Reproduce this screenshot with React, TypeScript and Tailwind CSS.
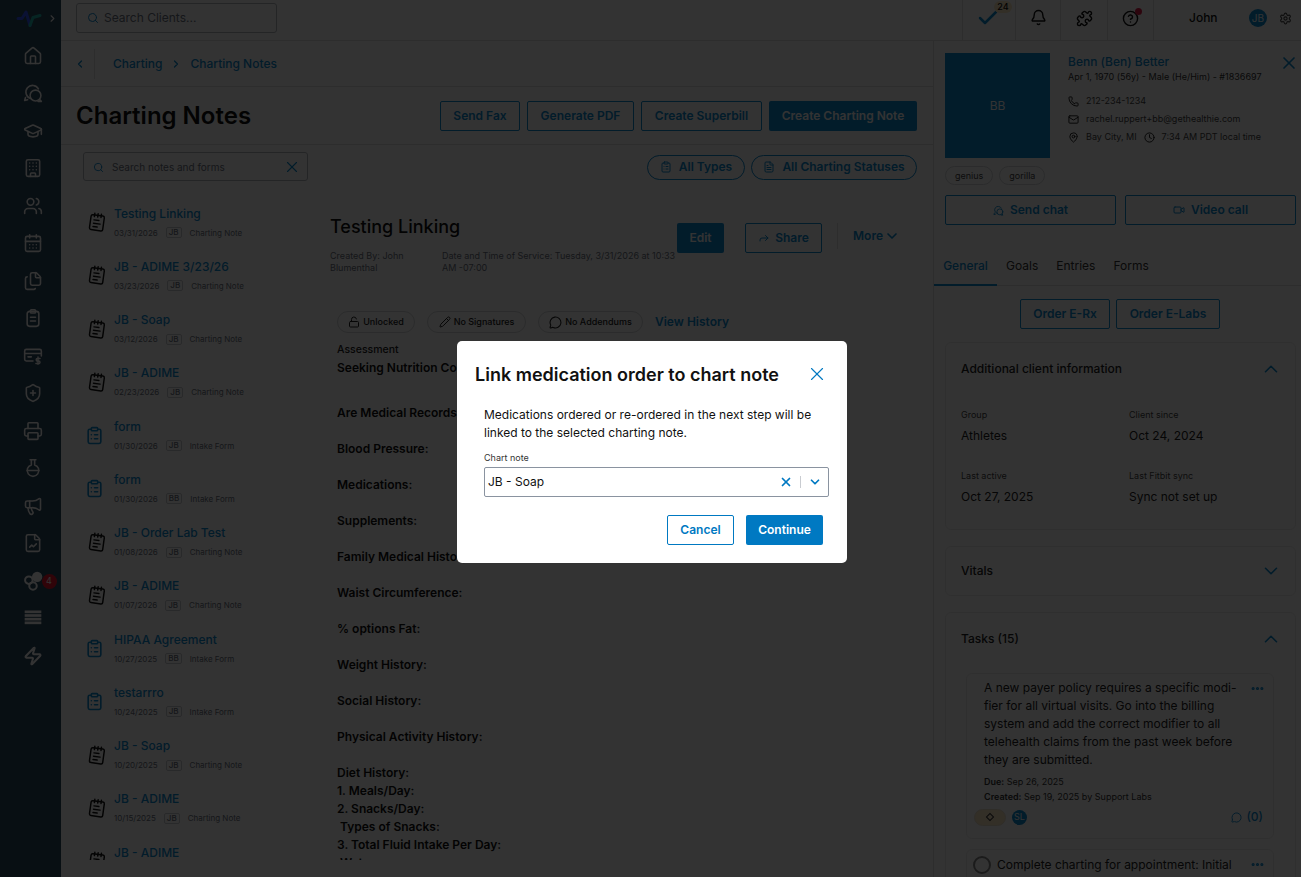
import { ReactNode } from 'react';
import {
  House, GraduationCap, Building, Users, CalendarDays, Files, ShieldPlus, Printer,
  FlaskRound, Megaphone, FileChartLine, Zap, Search, ChevronLeft, ChevronRight, ChevronDown, ChevronUp, X, Check,
  Bell, Puzzle, CircleHelp, Settings, Phone, Mail, MapPin, Clock, Video, MessageCircle, LockOpen, Pencil, Forward,
  ClipboardList, NotepadText, FileText, Ellipsis,
} from 'lucide-react';

const notes = [
  { title: 'Testing Linking', date: '03/31/2026', who: 'JB', type: 'Charting Note' },
  { title: 'JB - ADIME 3/23/26', date: '03/23/2026', who: 'JB', type: 'Charting Note' },
  { title: 'JB - Soap', date: '03/12/2026', who: 'JB', type: 'Charting Note' },
  { title: 'JB - ADIME', date: '02/23/2026', who: 'JB', type: 'Charting Note' },
  { title: 'form', date: '01/30/2026', who: 'JB', type: 'Intake Form' },
  { title: 'form', date: '01/30/2026', who: 'BB', type: 'Intake Form' },
  { title: 'JB - Order Lab Test', date: '01/08/2026', who: 'JB', type: 'Charting Note' },
  { title: 'JB - ADIME', date: '01/07/2026', who: 'JB', type: 'Charting Note' },
  { title: 'HIPAA Agreement', date: '10/27/2025', who: 'BB', type: 'Intake Form' },
  { title: 'testarrro', date: '10/24/2025', who: 'JB', type: 'Intake Form' },
  { title: 'JB - Soap', date: '10/20/2025', who: 'JB', type: 'Charting Note' },
  { title: 'JB - ADIME', date: '10/15/2025', who: 'JB', type: 'Charting Note' },
  { title: 'JB - ADIME', date: '10/02/2025', who: 'JB', type: 'Charting Note' },
];

// Question rows of the note body; null leaves a blank line
const noteLines: (string | null)[] = [
  'Are Medical Records Available?', null,
  'Blood Pressure:', null,
  'Medications:', null,
  'Supplements:', null,
  'Family Medical History:', null,
  'Waist Circumference:', null,
  '% options Fat:', null,
  'Weight History:', null,
  'Social History:', null,
  'Physical Activity History:', null,
  'Diet History:',
  '1. Meals/Day:',
  '2. Snacks/Day:',
  '\u00a0Types of Snacks:',
  '3. Total Fluid Intake Per Day:',
  '\u00a0Water:',
];

function ChatIcon({ size = 20 }: { size?: number }) {
  return (
    <svg width={size} height={size} viewBox="0 0 24 24" fill="none" stroke="currentColor" strokeWidth="1.9" strokeLinecap="round" strokeLinejoin="round">
      <path d="M9 18.5A8 8 0 1 1 18.5 7" />
      <path d="M3 17.5 2 21l3.5-1" />
      <circle cx="15" cy="15" r="6.5" />
      <path d="M20 20l2 2h-4" />
    </svg>
  );
}

function ClipboardLines() {
  return (
    <svg width="20" height="20" viewBox="0 0 24 24" fill="none" stroke="currentColor" strokeWidth="1.9" strokeLinecap="round" strokeLinejoin="round">
      <rect x="5" y="4" width="14" height="18" rx="3" />
      <rect x="9" y="2" width="6" height="4" rx="1" />
      <path d="M9 11h6M9 15.5h6" />
    </svg>
  );
}

function BillingCard() {
  return (
    <svg width="20" height="20" viewBox="0 0 24 24" fill="none" stroke="currentColor" strokeWidth="1.9" strokeLinecap="round" strokeLinejoin="round">
      <path d="M12 18H4a2 2 0 0 1-2-2V6a2 2 0 0 1 2-2h16a2 2 0 0 1 2 2v6" />
      <path d="M2 9h20M6 13h4" />
      <path d="M18 13v9M20.5 15h-3.2a1.4 1.4 0 0 0 0 3h1.6a1.4 1.4 0 0 1 0 3H15.5" strokeWidth="1.7" />
    </svg>
  );
}

function PillsIcon() {
  return (
    <svg width="20" height="20" viewBox="0 0 24 24" fill="none" stroke="currentColor" strokeWidth="2.4">
      <circle cx="7" cy="11" r="4.5" />
      <circle cx="17" cy="7" r="5" fill="currentColor" />
      <circle cx="12" cy="18" r="4.5" />
      <path d="M9 15l-1-1" />
    </svg>
  );
}

function StackIcon() {
  return (
    <svg width="20" height="20" viewBox="0 0 24 24" fill="currentColor">
      <rect x="2" y="3" width="20" height="3.2" />
      <rect x="2" y="7.4" width="20" height="3.2" />
      <rect x="2" y="11.8" width="20" height="3.2" />
      <rect x="2" y="16.2" width="20" height="3.2" />
    </svg>
  );
}

function Logo() {
  return (
    <svg width="26" height="18" viewBox="0 0 26 18" fill="none" strokeWidth="3" strokeLinecap="round" strokeLinejoin="round">
      <path d="M2 8.5h4l4-6.5 4 13.5" stroke="#3355ff" />
      <path d="M14 15.5l3-8 7-2" stroke="#22b8b0" />
    </svg>
  );
}

const navIcons: ReactNode[] = [
  <House size={20} strokeWidth={1.9} />,
  <ChatIcon />,
  <GraduationCap size={20} strokeWidth={1.9} />,
  <Building size={20} strokeWidth={1.9} />,
  <Users size={20} strokeWidth={1.9} />,
  <CalendarDays size={20} strokeWidth={1.9} />,
  <Files size={20} strokeWidth={1.9} />,
  <ClipboardLines />,
  <BillingCard />,
  <ShieldPlus size={20} strokeWidth={1.9} />,
  <Printer size={20} strokeWidth={1.9} />,
  <FlaskRound size={20} strokeWidth={1.9} />,
  <Megaphone size={20} strokeWidth={1.9} />,
  <FileChartLine size={20} strokeWidth={1.9} />,
  <PillsIcon />,
  <StackIcon />,
  <Zap size={20} strokeWidth={2.4} />,
];

function Sidebar() {
  return (
    <aside className="w-[61px] shrink-0 bg-[#2b4a5e] text-white flex flex-col items-center">
      <div className="h-[37px] w-full flex items-center pl-[16px] gap-[5px]">
        <Logo />
        <ChevronRight size={11} strokeWidth={2.5} />
      </div>
      <div className="flex flex-col items-center gap-[17.5px] mt-[8.5px] ml-[4px]">
        {navIcons.map((icon, i) => (
          <div key={i} className="relative h-5 w-5 flex items-center justify-center">
            {icon}
            {i === 14 && (
              <span className="absolute left-[19px] top-[3px] h-[15px] w-[15px] rounded-full bg-[#f0182f] text-[9px] flex items-center justify-center">4</span>
            )}
          </div>
        ))}
      </div>
    </aside>
  );
}

function TopBar() {
  return (
    <div className="h-[41px] shrink-0 border-b border-[#e0e0e0] flex items-stretch pl-[15px]">
      <div className="w-[201px] h-[30px] mt-[3px] border border-[#b3b8bf] rounded-[3px] flex items-center pl-[10px] gap-[5px]">
        <Search size={12} strokeWidth={2} className="text-[#0a8ad2]" />
        <span className="text-[12px] text-[#6b7280]">Search Clients...</span>
      </div>
      <div className="flex-1" />
      <div className="w-[53px] border-l border-[#e0e0e0] relative flex items-center justify-center pb-[4px]">
        <Check size={24} strokeWidth={2.5} className="text-[#0a8ad2] mr-[2px]" />
        <span className="absolute left-[31px] top-[1px] h-[12px] w-[18px] rounded-full bg-[#fde9c4] text-[9px] font-medium text-[#111] flex items-center justify-center">24</span>
      </div>
      <div className="w-[45px] border-l border-[#e0e0e0] flex items-center justify-center pb-[6px]"><Bell size={17} strokeWidth={2} className="text-[#111]" /></div>
      <div className="w-[47px] border-l border-[#e0e0e0] flex items-center justify-center pb-[3px]"><Puzzle size={17} strokeWidth={2} className="text-[#111]" /></div>
      <div className="w-[46px] border-l border-[#e0e0e0] relative flex items-center justify-center pb-[4px]">
        <CircleHelp size={17} strokeWidth={2} className="text-[#111]" />
        <span className="absolute left-[27px] top-[8px] h-[7px] w-[7px] rounded-full bg-[#e11d48]" />
      </div>
      <div className="w-[148px] border-l border-[#e0e0e0] flex items-center pb-[4px]">
        <span className="ml-[35px] text-[12px] font-medium text-[#111] w-[60px]">John</span>
        <span className="h-[18px] w-[18px] rounded-full bg-[#0a8ad2] text-white text-[10px] flex items-center justify-center">JB</span>
        <Settings size={13} className="ml-[12px] text-[#444]" />
      </div>
    </div>
  );
}

function OutlineButton({ children, className = '' }: { children: ReactNode; className?: string }) {
  return (
    <button className={`h-[30px] rounded-[2px] border border-[#0a8ad2] text-[#0a8ad2] text-[12px] font-semibold flex items-center justify-center ${className}`}>
      {children}
    </button>
  );
}

function NoteRow({ note }: { note: (typeof notes)[number] }) {
  const isForm = note.type === 'Intake Form';
  return (
    <div className="h-[53.25px] shrink-0 flex items-center pl-[11px]">
      <div className="w-[27px] shrink-0">
        {isForm
          ? <ClipboardList size={19} strokeWidth={2} className="text-[#0a8ad2] -ml-[2px]" />
          : <NotepadText size={20} strokeWidth={1.75} className="text-[#111] rotate-[8deg]" />}
      </div>
      <div className="min-w-0">
        <div className="text-[12px] leading-[16px] font-medium text-[#0a8ad2] whitespace-nowrap">{note.title}</div>
        <div className="mt-[5px] flex items-center text-[8px] text-[#6b7280] whitespace-nowrap">
          <span>{note.date}</span>
          <span className="mx-[8px] border border-[#c9ccd1] rounded-[2px] px-[2px] h-[11px] leading-[9px] font-medium">{note.who}</span>
          <span>{note.type}</span>
        </div>
      </div>
    </div>
  );
}

function StatusPill({ icon, label, className }: { icon: ReactNode; label: string; className: string }) {
  return (
    <span className={`h-[22px] rounded-full border border-[#d5d7da] flex items-center justify-center gap-[3px] text-[9px] font-medium text-[#222] ${className}`}>
      {icon}
      {label}
    </span>
  );
}

function NotePane() {
  return (
    <div className="flex-1 min-w-0 overflow-hidden pl-[22px] pr-[16px]">
      <div className="flex">
        <div className="w-[347px] shrink-0">
          <h2 className="text-[18px] leading-[24px] font-medium text-[#111] mt-[34px]">Testing Linking</h2>
          <div className="mt-[11px] flex text-[9px] leading-[12px] text-[#6b7280]">
            <div className="w-[112px] shrink-0 pr-[30px]">Created By: John Blumenthal</div>
            <div className="w-[235px]">Date and Time of Service: Tuesday, 3/31/2026 at 10:33 AM -07:00</div>
          </div>
        </div>
        <div className="flex items-start mt-[42px]">
          <button className="h-[30px] w-[47px] rounded-[2px] bg-[#0a8ad2] text-white text-[12px] font-semibold">Edit</button>
          <OutlineButton className="w-[77px] ml-[21px] gap-[5px]"><Forward size={12} />Share</OutlineButton>
          <div className="ml-[15px] pl-[15px] border-l border-[#e0e0e0] h-[26px] flex items-center gap-[1px] text-[12px] font-semibold text-[#0a8ad2]">
            More<ChevronDown size={16} strokeWidth={2.5} />
          </div>
        </div>
      </div>
      <div className="flex items-center mt-[37px] ml-[7px] gap-[12px]">
        <StatusPill className="w-[78px]" icon={<LockOpen size={12} />} label="Unlocked" />
        <StatusPill className="w-[99px]" icon={<Pencil size={12} />} label="No Signatures" />
        <StatusPill className="w-[105px]" icon={<MessageCircle size={13} />} label="No Addendums" />
        <span className="text-[12px] font-semibold text-[#0a8ad2]">View History</span>
      </div>
      <div className="ml-[7px] mt-[10px] text-[10.5px] leading-[14px] font-medium text-[#222]">Assessment</div>
      <div className="ml-[7px] mt-[2px] text-[12px] leading-[18px] font-semibold text-[#111]">
        <div className="h-[45px] whitespace-nowrap">Seeking Nutrition Counseling</div>
        {noteLines.map((line, i) => (
          <div key={i} className="h-[18px] whitespace-nowrap">{line}</div>
        ))}
      </div>
    </div>
  );
}

function InfoField({ label, value }: { label: string; value: string }) {
  return (
    <div>
      <div className="text-[9px] leading-[12px] text-[#444]">{label}</div>
      <div className="mt-[7px] text-[12px] leading-[16px] text-[#222]">{value}</div>
    </div>
  );
}

function ClientPanel() {
  return (
    <div className="w-[368px] shrink-0 border-l border-[#e0e0e0] overflow-hidden relative">
      <div className="flex pl-[11px] pt-[12px]">
        <div className="h-[105px] w-[105px] bg-[#0a8ad2] text-white text-[12px] flex items-center justify-center">BB</div>
        <div className="ml-[18px] pt-[1px]">
          <div className="text-[12px] leading-[16px] font-medium text-[#0a8ad2]">Benn (Ben) Better</div>
          <div className="text-[9px] leading-[14px] text-[#333]">Apr 1, 1970 (56y) - Male (He/Him) - #1836697</div>
          <div className="mt-[11px] flex flex-col gap-[6px] text-[9px] leading-[12px] text-[#444]">
            <div className="flex items-center gap-[7px]"><Phone size={11} className="text-[#111]" />212-234-1234</div>
            <div className="flex items-center gap-[7px]"><Mail size={11} className="text-[#111]" />rachel.ruppert+bb@gethealthie.com</div>
            <div className="flex items-center gap-[7px]">
              <MapPin size={11} className="text-[#111]" />Bay City, MI
              <Clock size={11} className="text-[#111]" /><span>7:34 AM PDT local time</span>
            </div>
          </div>
        </div>
      </div>
      <X size={20} strokeWidth={2} className="absolute right-[2px] top-[12px] text-[#0a8ad2]" />
      <div className="flex gap-[6px] pl-[11px] mt-[8px]">
        <span className="h-[19px] px-[9px] rounded-full border border-[#d5d7da] text-[9px] text-[#444] flex items-center">genius</span>
        <span className="h-[19px] px-[9px] rounded-full border border-[#d5d7da] text-[9px] text-[#444] flex items-center">gorilla</span>
      </div>
      <div className="flex gap-[9px] pl-[11px] mt-[10px]">
        <OutlineButton className="w-[171px] gap-[6px]"><ChatIcon size={11} />Send chat</OutlineButton>
        <OutlineButton className="w-[171px] gap-[6px]"><Video size={12} />Video call</OutlineButton>
      </div>
      <div className="mt-[29px] flex h-[32px] border-b border-[#e0e0e0] text-[12px] text-[#333]">
        <span className="w-[63px] text-center pt-[3px] text-[#0a8ad2] font-medium border-b-2 border-[#0a8ad2] h-[32px]">General</span>
        <span className="ml-[9px] pt-[3px]">Goals</span>
        <span className="ml-[18px] pt-[3px]">Entries</span>
        <span className="ml-[18px] pt-[3px]">Forms</span>
      </div>
      <div className="flex justify-center gap-[6px] mt-[13px] pl-[5px]">
        <OutlineButton className="w-[90px]">Order E-Rx</OutlineButton>
        <OutlineButton className="w-[104px]">Order E-Labs</OutlineButton>
      </div>

      <div className="ml-[11px] mr-[5px] mt-[13px] flex flex-col gap-[16px]">
        <section className="h-[188px] border border-[#ececec] rounded-[6px] px-[15px]">
          <div className="h-[52px] flex items-center justify-between text-[12px] font-medium text-[#222]">
            Additional client information
            <ChevronUp size={22} strokeWidth={1.75} className="text-[#0a8ad2] -mr-[2px]" />
          </div>
          <div className="grid grid-cols-2 gap-y-[26px] mt-[14px] w-[336px]">
            <InfoField label="Group" value="Athletes" />
            <InfoField label="Client since" value="Oct 24, 2024" />
            <InfoField label="Last active" value="Oct 27, 2025" />
            <InfoField label="Last Fitbit sync" value="Sync not set up" />
          </div>
        </section>
        <section className="h-[50px] border border-[#ececec] rounded-[6px] px-[15px] flex items-center justify-between text-[12px] font-medium text-[#222]">
          Vitals
          <ChevronDown size={22} strokeWidth={1.75} className="text-[#0a8ad2] -mr-[2px]" />
        </section>
        <section className="h-[300px] border border-[#ececec] rounded-[6px] px-[15px]">
          <div className="h-[52px] flex items-center justify-between text-[12px] font-medium text-[#222]">
            Tasks (15)
            <ChevronUp size={22} strokeWidth={1.75} className="text-[#0a8ad2] -mr-[2px]" />
          </div>
          <div className="relative ml-[5px] mr-[6px] mt-[8px] h-[166px] border border-[#ececec] rounded-[6px] pl-[17px] pr-[30px] pt-[5px]">
            <Ellipsis size={15} strokeWidth={3} className="absolute right-[8px] top-[7px] text-[#0a8ad2]" />
            <p className="text-[12px] leading-[18px] text-[#222] whitespace-nowrap">
              A new payer policy requires a specific modi-<br />fier for all virtual visits. Go into the billing<br />system and add the correct modifier to all<br />telehealth claims from the past week before<br />they are submitted.
            </p>
            <div className="mt-[5px] text-[9px] leading-[15px] text-[#333]"><b className="font-semibold">Due:</b> Sep 26, 2025</div>
            <div className="text-[9px] leading-[15px] text-[#333]"><b className="font-semibold">Created:</b> Sep 19, 2025 by Support Labs</div>
            <div className="flex items-center mt-[4px] -ml-[10px]">
              <span className="h-[17px] w-[32px] rounded-full bg-[#fde9c4] border border-[#eadfc9] flex items-center justify-center">
                <span className="h-[6px] w-[6px] rotate-45 border border-[#333]" />
              </span>
              <span className="ml-[6px] h-[15px] w-[15px] rounded-full bg-[#0a8ad2] text-white text-[9px] flex items-center justify-center">SL</span>
              <span className="ml-auto -mr-[20px] flex items-center gap-[4px] text-[#0a8ad2] text-[12px] font-medium">
                <MessageCircle size={11} />(0)
              </span>
            </div>
          </div>
          <div className="relative ml-[5px] mr-[6px] mt-[10px] h-[60px] border border-[#ececec] rounded-[6px] pl-[6px] pt-[6px] flex">
            <span className="h-[18px] w-[18px] rounded-full border-2 border-[#888] shrink-0" />
            <p className="ml-[6px] text-[12px] leading-[18px] text-[#222] whitespace-nowrap">Complete charting for appointment: Initial</p>
            <Ellipsis size={15} strokeWidth={3} className="absolute right-[8px] top-[7px] text-[#0a8ad2]" />
          </div>
        </section>
      </div>
    </div>
  );
}

function Modal() {
  return (
    <div className="fixed inset-0 bg-black/80 flex items-start justify-center pt-[341px] pl-[3px]">
      <div className="w-[390px] h-[222px] bg-white rounded-[5px] px-[18px] pt-[20px]">
        <div className="flex items-center justify-between h-[26px]">
          <h3 className="text-[18px] font-semibold text-[#111]">Link medication order to chart note</h3>
          <X size={22} strokeWidth={1.25} className="text-[#0079c2] mr-[1px]" />
        </div>
        <div className="ml-[9px] mt-[19px] w-[345px]">
          <p className="text-[12px] leading-[18px] text-[#111]">
            Medications ordered or re-ordered in the next step will be linked to the selected charting note.
          </p>
          <div className="mt-[10px] text-[9px] leading-[12px] text-[#333]">Chart note</div>
          <div className="mt-[3px] h-[30px] border border-[#8a93a0] rounded-[2px] flex items-center pl-[3px] pr-[6px] text-[12px] text-[#111]">
            <span className="flex-1">JB - Soap</span>
            <X size={14} strokeWidth={3} className="text-[#0079c2]" />
            <span className="mx-[7px] h-[12px] w-px bg-[#c9ccd1]" />
            <ChevronDown size={14} strokeWidth={3} className="text-[#0079c2]" />
          </div>
        </div>
        <div className="flex justify-end gap-[12px] mt-[18px] mr-[6px]">
          <button className="h-[30px] w-[67px] rounded-[2px] border border-[#0079c2] text-[#0079c2] text-[12px] font-semibold">Cancel</button>
          <button className="h-[30px] w-[77px] rounded-[2px] bg-[#0079c2] text-white text-[12px] font-semibold">Continue</button>
        </div>
      </div>
    </div>
  );
}

export default function App() {
  return (
    <div className="relative h-[877px] w-[1301px] overflow-hidden flex bg-white font-['Inter',sans-serif]">
      <Sidebar />
      <div className="flex-1 min-w-0 flex flex-col">
        <TopBar />
        <div className="flex-1 min-h-0 flex">
          <main className="flex-1 min-w-0 flex flex-col">
            <div className="h-[46px] shrink-0 border-b border-[#e0e0e0] flex items-center pl-[13px] pt-[1px] text-[12px] font-medium text-[#0a8ad2]">
              <ChevronLeft size={12} strokeWidth={2.5} />
              <span className="h-[30px] w-px bg-[#e0e0e0] ml-[8px] mr-[18px]" />
              Charting
              <ChevronRight size={12} strokeWidth={2.5} className="mx-[8px]" />
              Charting Notes
            </div>
            <div className="h-[58px] shrink-0 border-b border-[#e0e0e0] flex items-center justify-between pl-[15px] pr-[16px]">
              <h1 className="text-[24px] font-semibold text-[#111]">Charting Notes</h1>
              <div className="flex gap-[7px] mt-[1px]">
                <OutlineButton className="w-[80px]">Send Fax</OutlineButton>
                <OutlineButton className="w-[107px]">Generate PDF</OutlineButton>
                <OutlineButton className="w-[121px]">Create Superbill</OutlineButton>
                <button className="h-[30px] w-[148px] rounded-[2px] bg-[#0a8ad2] text-white text-[12px] font-semibold">Create Charting Note</button>
              </div>
            </div>
            <div className="h-[715px] shrink-0 overflow-hidden flex">
              <div className="w-[247px] shrink-0 pl-[15px] flex flex-col">
                <div className="ml-[7px] w-[225px] h-[29px] mt-[7px] border border-[#b3b8bf] rounded-[3px] flex items-center pl-[9px] pr-[6px] pt-[1px] gap-[8px] text-[10px] text-[#6b7280] shrink-0">
                  <Search size={11} className="text-[#0a8ad2]" />
                  <span className="flex-1">Search notes and forms</span>
                  <X size={18} strokeWidth={1.5} className="text-[#0a8ad2]" />
                </div>
                <div className="mt-[14.5px] flex-1 min-h-0 overflow-hidden flex flex-col">
                  {notes.map((note, i) => <NoteRow key={i} note={note} />)}
                </div>
              </div>
              <div className="flex-1 min-w-0 flex flex-col">
                <div className="h-[36px] shrink-0 pr-[16px] pt-[10px] flex justify-end gap-[6px]">
                  <span className="h-[25px] w-[98px] rounded-full border border-[#0a8ad2] pb-[1px] flex items-center justify-center gap-[7px] text-[12px] font-semibold text-[#0a8ad2]">
                    <ClipboardList size={12} />All Types
                  </span>
                  <span className="h-[25px] w-[166px] rounded-full border border-[#0a8ad2] pb-[1px] flex items-center justify-center gap-[7px] text-[12px] font-semibold text-[#0a8ad2]">
                    <FileText size={12} />All Charting Statuses
                  </span>
                </div>
                <NotePane />
              </div>
            </div>
          </main>
          <ClientPanel />
        </div>
      </div>
      <Modal />
    </div>
  );
}
